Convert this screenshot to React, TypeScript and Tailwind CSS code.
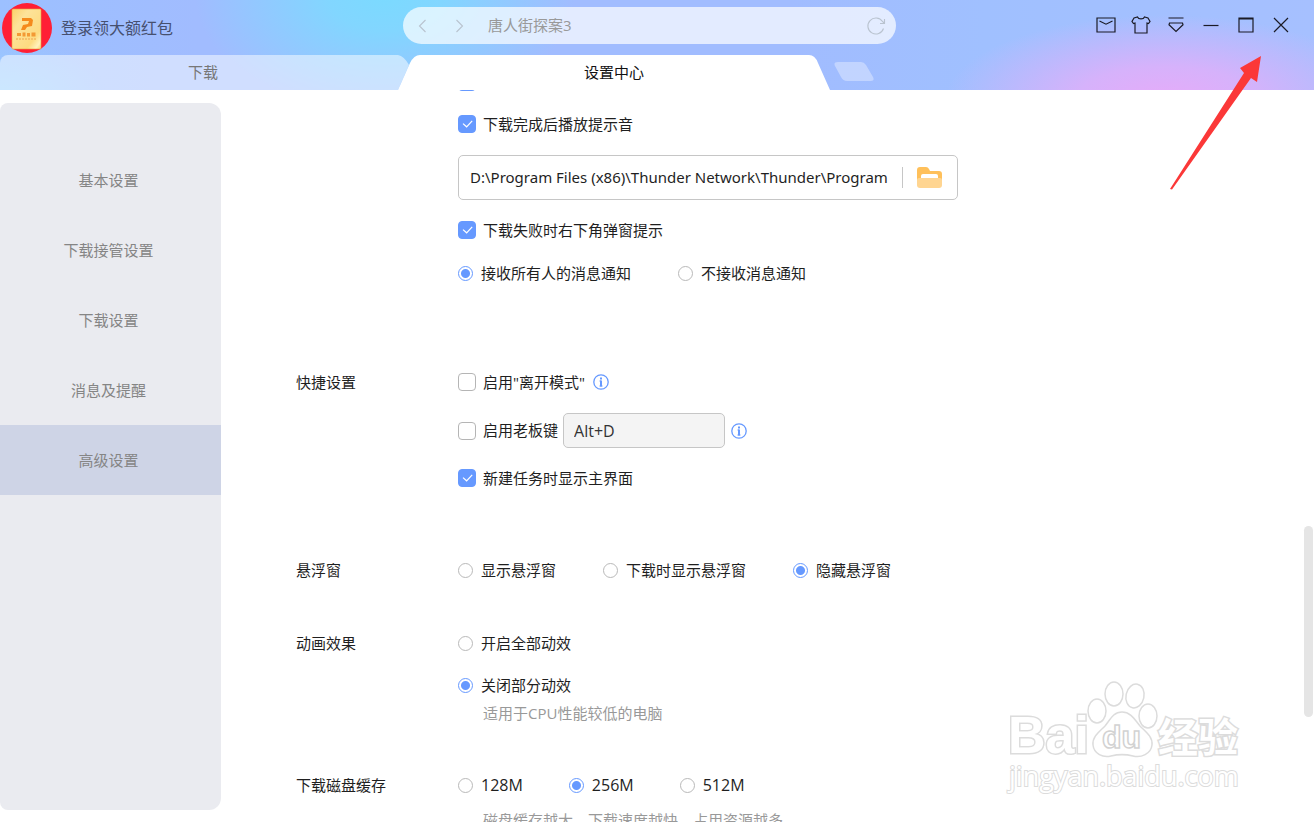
import { useState } from "react";
import type { ReactNode } from "react";

const menuItems = ["基本设置", "下载接管设置", "下载设置", "消息及提醒", "高级设置"];

function Checkbox({
  label,
  ariaLabel,
  defaultChecked = false,
}: {
  label?: string;
  ariaLabel?: string;
  defaultChecked?: boolean;
}) {
  return (
    <label className="flex h-6 items-center gap-[7px]">
      <span className="grid size-[18px] shrink-0 place-items-center">
        <input
          type="checkbox"
          aria-label={ariaLabel}
          defaultChecked={defaultChecked}
          className="peer col-start-1 row-start-1 size-[18px] appearance-none rounded border border-[#b5b5b5] bg-white checked:border-[#6699ff] checked:bg-[#6699ff]"
        />
        <svg
          viewBox="0 0 18 18"
          className="pointer-events-none invisible col-start-1 row-start-1 size-[18px] peer-checked:visible"
          fill="none"
          stroke="#fff"
          strokeWidth={1.2}
        >
          <path d="M5 8.6l3.600 3.200 5.600-6" />
        </svg>
      </span>
      {label}
    </label>
  );
}

function RadioGroup({
  name,
  options,
  selected,
  className = "flex gap-[47px]",
}: {
  name: string;
  options: string[];
  selected: string;
  className?: string;
}) {
  return (
    <div role="radiogroup" aria-label={name} className={className}>
      {options.map((option) => (
        <label key={option} className="flex h-6 items-center gap-2">
          <input
            type="radio"
            name={name}
            defaultChecked={option === selected}
            className="size-[15px] shrink-0 appearance-none rounded-full border border-[#b9b9b9] bg-white checked:border-[#6699ff] checked:bg-[radial-gradient(circle,#6699ff_4px,#fff_5px)]"
          />
          {option}
        </label>
      ))}
    </div>
  );
}

function Section({
  title,
  className = "",
  children,
}: {
  title?: string;
  className?: string;
  children: ReactNode;
}) {
  return (
    <section className={`flex ${className}`}>
      <h2 className="w-[162px] shrink-0 leading-6">{title}</h2>
      <div className="min-w-0 flex-1">{children}</div>
    </section>
  );
}

function InfoButton() {
  return (
    <button type="button" aria-label="说明" className="shrink-0">
      <svg viewBox="0 0 16 16" className="size-4" fill="none" stroke="#6699ff">
        <circle cx="8" cy="8" r="7.2" strokeWidth={1.3} />
        <path d="M8 3.500v2" strokeWidth={2} />
        <path d="M8 6.500v6" strokeWidth={2} />
        <path d="M6.500 7H8M6.500 12h3" strokeWidth={1} />
      </svg>
    </button>
  );
}

function WindowButton({ label, children }: { label: string; children: ReactNode }) {
  return (
    <button type="button" aria-label={label} className="flex h-9 w-[35px] items-center justify-center">
      <svg viewBox="0 0 20 20" className="size-5" fill="none" stroke="#1b1b26" strokeWidth={1.2}>
        {children}
      </svg>
    </button>
  );
}

function Avatar() {
  return (
    <svg viewBox="0 0 50 50" className="size-[50px] shrink-0">
      <defs>
        <linearGradient id="packet" x1="0" y1="0" x2="1" y2="1">
          <stop offset="0" stopColor="#fbd06a" />
          <stop offset="0.3" stopColor="#fde39a" />
          <stop offset="0.75" stopColor="#fddb80" />
          <stop offset="0.9" stopColor="#fff2bd" />
          <stop offset="1" stopColor="#fbd06a" />
        </linearGradient>
      </defs>
      <circle cx="25" cy="25" r="25" fill="#ff1f35" />
      <rect x="10" y="6" width="29" height="40" rx="1" fill="url(#packet)" stroke="#e9a13d" strokeWidth="0.6" />
      <path d="M20 15h9l2 2-1 6-5 1-2 3h-4l2-5 5-1 1-3h-7z" fill="#f58a1c" />
      <path d="M15 30h4v3h-4zM20.500 29.500h3v4h-3zM25 30h3v3.500h-3zM29.500 29.500h4v4h-4z" fill="#f39a35" />
      <path d="M14 36h20" stroke="#f7c06a" strokeWidth="2" strokeDasharray="2 1" />
    </svg>
  );
}

function Header() {
  return (
    <header className="shrink-0 bg-[radial-gradient(ellipse_220px_85px_at_1165px_100px,#e6abf9_0%,#d6b2fb_40%,transparent_100%),radial-gradient(ellipse_190px_120px_at_385px_-5px,#7bdaff_0%,#82d6ff_30%,transparent_100%),radial-gradient(ellipse_110px_60px_at_0px_100px,#96d2ff_0%,transparent_100%),linear-gradient(90deg,#9cc0ff_0%,#a1bcff_15%,#a1bcff_60%,#a0c0ff_75%,#a6c0ff_100%)]">
      <div className="flex h-[55px] items-start pr-4">
        <div className="flex w-[403px] shrink-0 items-center gap-[9px] pt-[3px] pl-0.5">
          <Avatar />
          <a href="#login" className="text-base text-[#46506f]">
            登录领大额红包
          </a>
        </div>
        <div className="mt-[7px] flex h-[37px] w-[493px] items-center rounded-full bg-white/70 px-2.5 text-[#b9c3cf]">
          <button type="button" aria-label="后退">
            <svg viewBox="0 0 20 20" className="size-5" fill="none" stroke="currentColor" strokeWidth={1.1}>
              <path d="M12.500 4L6.500 10l6 6" />
            </svg>
          </button>
          <button type="button" aria-label="前进" className="ml-4">
            <svg viewBox="0 0 20 20" className="size-5" fill="none" stroke="currentColor" strokeWidth={1.1}>
              <path d="M7.500 4l6 6-6 6" />
            </svg>
          </button>
          <input
            type="text"
            aria-label="搜索"
            placeholder="唐人街探案3"
            className="ml-[19px] min-w-0 flex-1 bg-transparent placeholder:text-[#999]"
          />
          <button type="button" aria-label="刷新">
            <svg viewBox="0 0 20 20" className="size-5" fill="none" stroke="currentColor" strokeWidth={1.1}>
              <path d="M17.500 12.500A8 8 0 1 1 16.500 5.500L18 7M18.500 3v4.500h-4.500" />
            </svg>
          </button>
        </div>
        <div className="mt-[7px] ml-auto flex">
          <WindowButton label="消息">
            <path d="M1 3h18v14H1zM3.500 6L10 9.200 16.500 6" />
          </WindowButton>
          <WindowButton label="皮肤">
            <path d="M6.500 2C7.500 4.600 12.500 4.600 13.500 2L17 3l2 3.500-1.500 2-1.500-.5v10H4V8L2.500 8.500 1 6.500 3 3z" />
          </WindowButton>
          <WindowButton label="菜单">
            <path d="M2.500 3h15M3.500 8h13l.5 1.800-7 6.700-7-6.700z" />
          </WindowButton>
          <WindowButton label="最小化">
            <path d="M2.500 10.500h15" />
          </WindowButton>
          <WindowButton label="最大化">
            <path d="M3 3h14v14H3zM3 4h14" />
          </WindowButton>
          <WindowButton label="关闭">
            <path d="M3 3l14 14M17 3L3 17" />
          </WindowButton>
        </div>
      </div>

      <div role="tablist" className="flex h-[35px]">
        <button
          type="button"
          role="tab"
          aria-selected={false}
          className="w-[398px] shrink-0 rounded-tl-lg bg-white/50 pl-2 text-[#777]"
        >
          下载
        </button>
        <svg viewBox="0 0 24 35" className="h-[35px] w-6 shrink-0">
          <path d="M0 0Q6 1 11 10L0 35z" fill="#fff" fillOpacity={0.5} />
          <path d="M0 35L12 8Q16 0 22 0h2v35z" fill="#fff" />
        </svg>
        <button
          type="button"
          role="tab"
          aria-selected={true}
          className="w-[384px] shrink-0 bg-white text-[#111]"
        >
          设置中心
        </button>
        <svg viewBox="0 0 24 35" className="h-[35px] w-6 shrink-0">
          <path d="M0 0h3Q9 0 12 8l12 27H0z" fill="#fff" />
        </svg>
        <button type="button" aria-label="新建标签" className="ml-1 self-start pt-[7px]">
          <svg viewBox="0 0 40 19" className="h-[19px] w-10">
            <path d="M4 0h23q3 0 5 3l7 12q2 4-2 4H13q-4 0-6-4L1 4q-2-4 3-4z" fill="#fff" fillOpacity={0.35} />
          </svg>
        </button>
      </div>
    </header>
  );
}

function Watermark() {
  return (
    <svg
      viewBox="0 0 250 120"
      className="pointer-events-none absolute right-[62px] bottom-[22px] h-[120px] w-[250px]"
      fill="#fff"
      stroke="#dcdcdc"
      strokeWidth={1.5}
    >
      <text x="6" y="73" fontFamily="Liberation Sans" fontSize="52" fontWeight="700" strokeWidth={3} paintOrder="stroke">
        Bai
      </text>
      <ellipse cx="95" cy="31" rx="9" ry="12" />
      <ellipse cx="112" cy="14" rx="9" ry="12" />
      <ellipse cx="133" cy="16" rx="9" ry="12" transform="rotate(12 133 16)" />
      <ellipse cx="146" cy="36" rx="9" ry="12" />
      <path d="M120 32c-9 0-12 8-17 14-6 6-13 11-12 19 1 9 10 13 18 11 8-2 14-2 22 0 8 2 18-2 19-11 1-8-6-13-12-19-5-6-9-14-18-14z" />
      <text x="100" y="68" fontFamily="Liberation Sans" fontSize="32" fontWeight="700" stroke="#d2d2d2">
        du
      </text>
      <text
        x="156"
        y="72"
        fontFamily="Noto Sans CJK SC"
        fontSize="40"
        fontWeight="700"
        strokeWidth={3}
        paintOrder="stroke"
      >
        经验
      </text>
      <text x="7" y="106" fontFamily="Open Sans" fontSize="27" fontWeight="500" strokeWidth={2} paintOrder="stroke">
        jingyan.baidu.com
      </text>
    </svg>
  );
}

export default function App() {
  const [active, setActive] = useState("高级设置");

  return (
    <div className="relative flex h-screen flex-col overflow-hidden bg-white font-['Open_Sans','Noto_Sans_CJK_SC',sans-serif] text-[15px] text-[#1f1f1f]">
      <Header />

      <div className="flex min-h-0 flex-1">
        <nav className="mt-[13px] mb-3 w-[221px] shrink-0 rounded-l-lg rounded-r-xl bg-[#eaebf0] pt-[42px]">
          {menuItems.map((item) => (
            <button
              key={item}
              type="button"
              onClick={() => setActive(item)}
              className={`h-[70px] w-full pr-1 text-[#858585] ${item === active ? "bg-[#ced4e6]" : ""}`}
            >
              {item}
            </button>
          ))}
        </nav>

        <main className="min-w-0 flex-1 overflow-hidden pl-[75px]">
          {/* Scrolled position: the first option is cut by the tab bar */}
          <Section className="-mt-5">
            <Checkbox ariaLabel="下载完成后弹窗提示" defaultChecked />
            <div className="mt-[18px]">
              <Checkbox label="下载完成后播放提示音" defaultChecked />
            </div>
            <div className="mt-[19px] flex h-[45px] w-[500px] items-center rounded-[5px] border border-[#c6c6c6] pr-[15px] pl-[11px]">
              <input
                type="text"
                aria-label="提示音路径"
                defaultValue="D:\Program Files (x86)\Thunder Network\Thunder\Program"
                className="min-w-0 flex-1 bg-transparent font-['Noto_Sans',sans-serif]"
              />
              <span className="ml-2.5 h-[21px] w-px bg-[#c6c6c6]" />
              <button type="button" aria-label="选择文件" className="ml-3.5">
                <svg viewBox="0 0 25 21" className="h-[21px] w-[25px]">
                  <path d="M3 0h6q2 0 3 2l1 2h9q3 0 3 3v10H0V3q0-3 3-3z" fill="#ffc05a" />
                  <rect x="4" y="7" width="17" height="6" rx="2" fill="#fff" />
                  <path d="M2 11h21q2 0 2 2v5q0 3-3 3H3q-3 0-3-3v-5q0-2 2-2z" fill="#ffd591" />
                </svg>
              </button>
            </div>
            <div className="mt-[18px]">
              <Checkbox label="下载失败时右下角弹窗提示" defaultChecked />
            </div>
            <RadioGroup
              name="消息通知"
              options={["接收所有人的消息通知", "不接收消息通知"]}
              selected="接收所有人的消息通知"
              className="mt-[19px] flex gap-[47px]"
            />
          </Section>

          <Section title="快捷设置" className="mt-[85px]">
            <div className="flex items-center gap-2">
              <Checkbox label={'启用"离开模式"'} />
              <InfoButton />
            </div>
            <div className="mt-[19px] flex items-center">
              <Checkbox label="启用老板键" />
              <input
                type="text"
                aria-label="老板键"
                defaultValue="Alt+D"
                className="ml-[5px] h-[35px] w-[162px] rounded-[5px] border border-[#c6c6c6] bg-[#f4f4f4] px-2.5 text-base text-[#333]"
              />
              <span className="ml-1.5 flex">
                <InfoButton />
              </span>
            </div>
            <div className="mt-[18px]">
              <Checkbox label="新建任务时显示主界面" defaultChecked />
            </div>
          </Section>

          <Section title="悬浮窗" className="mt-[68px]">
            <RadioGroup
              name="悬浮窗"
              options={["显示悬浮窗", "下载时显示悬浮窗", "隐藏悬浮窗"]}
              selected="隐藏悬浮窗"
            />
          </Section>

          <Section title="动画效果" className="mt-[49px]">
            <RadioGroup
              name="动画效果"
              options={["开启全部动效", "关闭部分动效"]}
              selected="关闭部分动效"
              className="flex flex-col gap-[18px]"
            />
            <p className="mt-1 pl-[25px] leading-6 text-[#999]">适用于CPU性能较低的电脑</p>
          </Section>

          <Section title="下载磁盘缓存" className="mt-12">
            <RadioGroup
              name="下载磁盘缓存"
              options={["128M", "256M", "512M"]}
              selected="256M"
              className="flex gap-[46px] text-base"
            />
            <p className="mt-[11px] pl-[25px] leading-6 text-[#999]">
              磁盘缓存越大，下载速度越快，占用资源越多
            </p>
          </Section>
        </main>
      </div>

      {/* Scrollbar thumb */}
      <div className="absolute right-px bottom-[105px] h-[191px] w-[9px] rounded-full bg-[#e5e5e5]" />

      <Watermark />

      {/* Arrow to the close button */}
      <svg
        viewBox="0 0 92 136"
        className="pointer-events-none absolute top-[55px] right-[52px] h-[136px] w-[92px]"
        fill="#fb3838"
      >
        <path d="M91 1L87 27l-6-4L2 134.500l-2-.5L74 18l-4-5z" />
      </svg>
    </div>
  );
}
